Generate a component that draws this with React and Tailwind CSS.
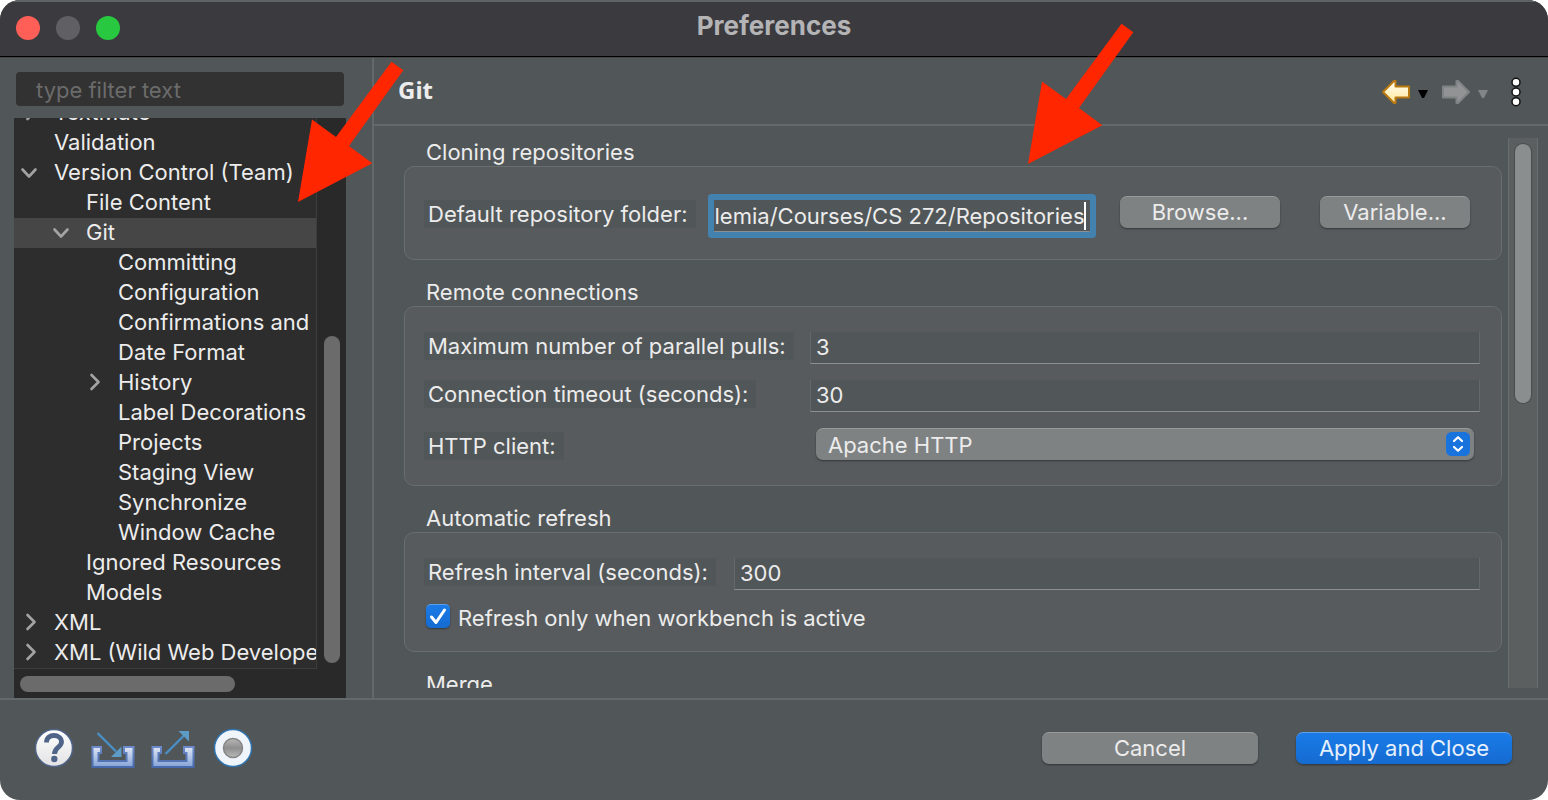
import React from "react";

const TREE = [
  { label: "TextMate", level: 0, state: "closed" },
  { label: "Validation", level: 0 },
  { label: "Version Control (Team)", level: 0, state: "open" },
  { label: "File Content", level: 1 },
  { label: "Git", level: 1, state: "open", selected: true },
  { label: "Committing", level: 2 },
  { label: "Configuration", level: 2 },
  { label: "Confirmations and", level: 2 },
  { label: "Date Format", level: 2 },
  { label: "History", level: 2, state: "closed" },
  { label: "Label Decorations", level: 2 },
  { label: "Projects", level: 2 },
  { label: "Staging View", level: 2 },
  { label: "Synchronize", level: 2 },
  { label: "Window Cache", level: 2 },
  { label: "Ignored Resources", level: 1 },
  { label: "Models", level: 1 },
  { label: "XML", level: 0, state: "closed" },
  { label: "XML (Wild Web Developer)", level: 0, state: "closed" },
];

const INDENT = ["pl-1", "pl-9", "pl-[68px]"];

function Chevron({ state }) {
  if (!state) return <span className="w-6 shrink-0" />;
  return (
    <svg viewBox="0 0 24 24" className="h-6 w-6 shrink-0" fill="none" stroke="#a3a3a3" strokeWidth="2.6" strokeLinecap="round" strokeLinejoin="round" aria-hidden="true">
      <path d={state === "open" ? "M4.500 8.500 11 15.500l6.500-7" : "M9.500 4 16.500 11l-7 7"} />
    </svg>
  );
}

function TreeRow({ item }) {
  return (
    <li
      role="treeitem"
      aria-selected={!!item.selected}
      className={`flex h-[30px] items-center gap-3 whitespace-nowrap pb-px ${INDENT[item.level]} ${item.selected ? "bg-[#464646]" : ""}`}
    >
      <Chevron state={item.state} />
      <span>{item.label}</span>
    </li>
  );
}

function Sidebar() {
  return (
    <aside className="flex w-[374px] shrink-0 flex-col border-r-2 border-[#636869] pl-3.5 pr-[26px] pt-3.5">
      <input
        type="text"
        aria-label="Filter preferences"
        placeholder="type filter text"
        className="mx-0.5 h-[34px] rounded-[4px] bg-[#323232] px-5 pt-0.5 text-[#ececec] outline-none placeholder:text-[#6b6b6b]"
      />
      <div className="mt-3 grid min-h-0 flex-1 grid-cols-[1fr_29px] grid-rows-[551px_1fr] bg-[#2d2d2d]">
        <div className="overflow-hidden border-b border-r border-[#3d3d3d]">
          <ul role="tree" className="-mt-5">
            {TREE.map((item) => (
              <TreeRow key={item.label} item={item} />
            ))}
          </ul>
        </div>
        <div className="flex items-end justify-center bg-[#292929] pb-1.5">
          <div className="h-[327px] w-4 rounded-full bg-[#6b6b6b]" />
        </div>
        <div className="col-span-2 flex items-center bg-[#292929] pl-1.5">
          <div className="h-4 w-[215px] rounded-full bg-[#6b6b6b]" />
        </div>
      </div>
    </aside>
  );
}

function Label({ htmlFor, children }) {
  return (
    <label htmlFor={htmlFor} className="flex h-7 items-center justify-self-start whitespace-nowrap bg-[#515658] pl-1 pr-2">
      {children}
    </label>
  );
}

function TextField({ id, value }) {
  return (
    <input
      id={id}
      type="text"
      defaultValue={value}
      className="h-8 w-full min-w-0 border-x border-b border-x-[#636869] border-b-[#8b8f90] bg-[#515658] px-[5px] outline-none"
    />
  );
}

function PushButton({ primary, className, children }) {
  return (
    <button
      type="button"
      className={`flex h-8 items-center justify-center rounded-[7px] border-t shadow-[0_1px_2px_rgba(0,0,0,0.4)] ${
        primary ? "border-[#5a9ff0] bg-linear-to-b from-[#1a7be8] to-[#156bd0] text-[#e6f0fc]" : "border-[#989b9c] bg-[#7f8283] text-[#ececec]"
      } ${className}`}
    >
      {children}
    </button>
  );
}

function Group({ title, className, children }) {
  return (
    <section className="mb-[18px]">
      <h2 className="h-7 pl-[22px] leading-7">{title}</h2>
      <div className={`rounded-[10px] border border-[#686d6f] bg-[#575b5d] pl-[19px] pr-[21px] ${className}`}>{children}</div>
    </section>
  );
}

function HeaderTools() {
  return (
    <div className="flex items-center pt-0.5">
      <button type="button" aria-label="Back">
        <svg viewBox="0 0 30 28" className="h-7 w-[30px]">
          <defs>
            <linearGradient id="gold" x1="0" y1="0" x2="0" y2="1">
              <stop offset="0" stopColor="#fffef4" />
              <stop offset="1" stopColor="#ffe69a" />
            </linearGradient>
          </defs>
          <path d="M2 14 13 3h1.500v5.500H28v11H14.500V25H13Z" fill="url(#gold)" stroke="#b87a10" strokeWidth="2" strokeLinejoin="round" />
        </svg>
      </button>
      <button type="button" aria-label="Back history" className="ml-1.5">
        <svg viewBox="0 0 12 28" className="h-7 w-3"><path d="M1 12h10l-4 8H5Z" fill="#000" /></svg>
      </button>
      <button type="button" aria-label="Forward" className="ml-3">
        <svg viewBox="0 0 30 28" className="h-7 w-[30px]">
          <path d="M28 14 17 3h-1.500v5.500H2v11h13.500V25H17Z" fill="#919394" stroke="#808384" strokeWidth="2" strokeLinejoin="round" />
        </svg>
      </button>
      <button type="button" aria-label="Forward history" className="ml-1.5">
        <svg viewBox="0 0 12 28" className="h-7 w-3"><path d="M1 12h10l-4 8H5Z" fill="#828586" /></svg>
      </button>
      <button type="button" aria-label="View menu" className="ml-5">
        <svg viewBox="0 0 14 32" className="h-8 w-3.5" fill="#fff" stroke="#111" strokeWidth="1.500">
          <circle cx="7" cy="6.300" r="4" />
          <circle cx="7" cy="16" r="4" />
          <circle cx="7" cy="25.700" r="4" />
        </svg>
      </button>
    </div>
  );
}

function GitPage() {
  return (
    <main className="flex min-w-0 flex-1 flex-col">
      <header className="flex h-[68px] items-center justify-between border-b-2 border-[#636869] pl-6 pr-[25px]">
        <h1 className="pb-0.5 font-['Noto_Sans',sans-serif] text-2xl font-bold">Git</h1>
        <HeaderTools />
      </header>
      <div className="mb-2.5 mt-3 flex h-[550px] overflow-hidden pl-[30px] pr-2.5">
        <div className="min-w-0 flex-1">
          <Group title="Cloning repositories" className="flex items-start gap-[30px] pb-[27px] pt-[29px]">
            <div className="flex min-w-0 flex-1 gap-[18px] pt-1">
              <Label htmlFor="folder">Default repository folder:</Label>
              <div className="relative flex h-8 min-w-0 flex-1 items-center justify-end rounded-[1px] border-b border-[#8b8f90] bg-[#515658] shadow-[0_0_0_6px_#4381ae]">
                <input id="folder" type="text" defaultValue="lemia/Courses/CS 272/Repositories" className="h-full w-full min-w-0 bg-transparent pl-px outline-none" />
                <span className="absolute right-1 top-0.5 h-7 w-0.5 bg-white" />
              </div>
            </div>
            <div className="flex gap-10 pr-2.5">
              <PushButton className="w-[160px]">Browse...</PushButton>
              <PushButton className="w-[150px]">Variable...</PushButton>
            </div>
          </Group>

          <Group title="Remote connections" className="grid grid-cols-[368px_1fr] gap-x-[18px] gap-y-4 py-[25px]">
            <Label htmlFor="pulls">Maximum number of parallel pulls:</Label>
            <TextField id="pulls" value="3" />
            <Label htmlFor="timeout">Connection timeout (seconds):</Label>
            <TextField id="timeout" value="30" />
            <div className="flex items-end">
              <Label htmlFor="client">HTTP client:</Label>
            </div>
            <div className="relative mx-1.5 h-8">
              <select id="client" className="block h-8 w-full appearance-none rounded-[7px] border-t border-[#989b9c] bg-[#7f8283] pl-3 text-[#ececec] shadow-[0_1px_2px_rgba(0,0,0,0.4)] outline-none">
                <option>Apache HTTP</option>
              </select>
              <svg viewBox="0 0 24 24" className="pointer-events-none absolute right-1 top-1 h-6 w-6" aria-hidden="true">
                <rect width="24" height="24" rx="5.500" fill="#1873dc" />
                <path d="M8 9 12 5.200 16 9M8 15l4 3.800 4-3.800" fill="none" stroke="#fff" strokeWidth="2.200" strokeLinecap="round" strokeLinejoin="round" />
              </svg>
            </div>
          </Group>

          <Group title="Automatic refresh" className="flex flex-col gap-3.5 pb-[23px] pt-[25px]">
            <div className="grid grid-cols-[292px_1fr] gap-x-[18px]">
              <Label htmlFor="interval">Refresh interval (seconds):</Label>
              <TextField id="interval" value="300" />
            </div>
            <div className="flex h-6 items-center gap-2 pl-0.5">
              <span className="relative h-6 w-6 shrink-0">
                <input id="active" type="checkbox" defaultChecked className="block h-6 w-6 appearance-none rounded-[5px] border-t border-[#5a9ff0] bg-linear-to-b from-[#1a7be8] to-[#156bd0] shadow-[0_1px_2px_rgba(0,0,0,0.4)]" />
                <svg viewBox="0 0 24 24" className="pointer-events-none absolute inset-0 h-6 w-6" fill="none" stroke="#fff" strokeWidth="3" strokeLinecap="round" strokeLinejoin="round" aria-hidden="true">
                  <path d="m5.500 13 4.500 5.500L18.500 6" />
                </svg>
              </span>
              <label htmlFor="active" className="whitespace-nowrap pt-1">Refresh only when workbench is active</label>
            </div>
          </Group>

          <h2 className="h-7 pl-[22px] leading-7">Merge</h2>
        </div>
        <div className="ml-1.5 flex w-[30px] shrink-0 justify-center border-x border-[#686d6f] bg-[#5b5f60] pt-1.5">
          <div className="h-[259px] w-4 rounded-full bg-[#8b8e8f] shadow-[0_0_1px_1px_rgba(0,0,0,0.2)]" />
        </div>
      </div>
    </main>
  );
}

const TRAY = "M1.500 19H10v6H7.500v8h28v-8H33v-6h9.500v20h-41Z";

function FooterIcons() {
  return (
    <div className="flex items-center">
      <button type="button" aria-label="Help">
        <svg viewBox="0 0 40 40" className="h-10 w-10">
          <defs>
            <linearGradient id="pearl" x1="0" y1="0" x2="0" y2="1">
              <stop offset="0" stopColor="#fff" />
              <stop offset="1" stopColor="#e2e2e4" />
            </linearGradient>
          </defs>
          <circle cx="20" cy="20" r="18.500" fill="url(#pearl)" stroke="#4f6488" strokeWidth="1.500" />
          <path d="M12.500 14.500c0-5 3.500-7 7.500-7s7.500 2.500 7.500 6.500c0 5.500-7 5-7 12" fill="none" stroke="#4f6488" strokeWidth="4.800" />
          <circle cx="20.300" cy="31" r="3.200" fill="#4f6488" />
        </svg>
      </button>
      <button type="button" aria-label="Import" className="ml-[17px]">
        <svg viewBox="0 0 44 40" className="h-10 w-11">
          <defs>
            <linearGradient id="tray" x1="0" y1="0" x2="0" y2="1">
              <stop offset="0" stopColor="#dfe6f6" />
              <stop offset="1" stopColor="#86a3d6" />
            </linearGradient>
            <linearGradient id="trayEdge" x1="0" y1="0" x2="0" y2="1">
              <stop offset="0" stopColor="#6d8aca" />
              <stop offset="1" stopColor="#466aab" />
            </linearGradient>
          </defs>
          <path d={TRAY} fill="url(#tray)" stroke="url(#trayEdge)" strokeWidth="2" />
          <path d="M6.500 5 25 23.500" stroke="#4a90c4" strokeWidth="2.400" />
          <path d="M30.500 29V18.500L20 29Z" fill="#5d9cc6" />
        </svg>
      </button>
      <button type="button" aria-label="Export" className="ml-4">
        <svg viewBox="0 0 44 40" className="h-10 w-11">
          <path d={TRAY} fill="url(#tray)" stroke="url(#trayEdge)" strokeWidth="2" />
          <path d="M14.500 26 33 7.500" stroke="#4a90c4" strokeWidth="2.400" />
          <path d="M38 3v10.500L27.500 3Z" fill="#5d9cc6" />
        </svg>
      </button>
      <button type="button" aria-label="Record" className="ml-[18px]">
        <svg viewBox="0 0 40 40" className="h-10 w-10">
          <defs>
            <linearGradient id="ball" x1="0" y1="0" x2="0" y2="1">
              <stop offset="0" stopColor="#b9b9b9" />
              <stop offset="0.500" stopColor="#8e8e8e" />
              <stop offset="1" stopColor="#b9b9b9" />
            </linearGradient>
          </defs>
          <circle cx="20" cy="20" r="18.500" fill="#eff5fa" stroke="#2f74b0" strokeWidth="1.500" />
          <circle cx="20" cy="20" r="9.500" fill="url(#ball)" stroke="#858585" strokeWidth="1.500" />
        </svg>
      </button>
    </div>
  );
}

function Pointer({ className }) {
  return (
    <svg viewBox="0 0 106 142" className={`pointer-events-none absolute h-[142px] w-[106px] ${className}`} aria-hidden="true">
      <path d="M0 141 14 58.500 38 76 93.500 .700 105.300 9.300 51 85 74.300 102.300Z" fill="#ff2600" />
    </svg>
  );
}

export default function App() {
  return (
    <div className="relative flex min-h-screen flex-col overflow-hidden rounded-[20px] bg-[#515658] font-[Inter,sans-serif] text-[22px] text-[#ececec]">
      <div className="grid h-[57px] grid-cols-[1fr_auto_1fr] items-center border-b border-t-2 border-b-black border-t-[#5f6366] bg-[#3b3b3f] px-4 pb-0.5">
        <div className="flex gap-4">
          <button type="button" aria-label="Close" className="h-6 w-6 rounded-full bg-[#ff5f57]" />
          <button type="button" aria-label="Minimize" className="h-6 w-6 rounded-full bg-[#606064]" />
          <button type="button" aria-label="Zoom" className="h-6 w-6 rounded-full bg-[#28c840]" />
        </div>
        <div className="pb-1 text-[26px] font-bold leading-8 text-[#b4b4b6]">Preferences</div>
      </div>

      <div className="flex min-h-0 flex-1 border-t border-[#434547]">
        <Sidebar />
        <GitPage />
      </div>

      <footer className="flex h-[102px] items-center justify-between border-t-2 border-[#636869] pb-1 pl-[34px] pr-9">
        <FooterIcons />
        <div className="flex gap-[38px]">
          <PushButton className="w-[216px]">Cancel</PushButton>
          <PushButton primary className="w-[216px]">Apply and Close</PushButton>
        </div>
      </footer>

      <Pointer className="left-[298px] top-[61px]" />
      <Pointer className="left-[1028px] top-[23px]" />
    </div>
  );
}
